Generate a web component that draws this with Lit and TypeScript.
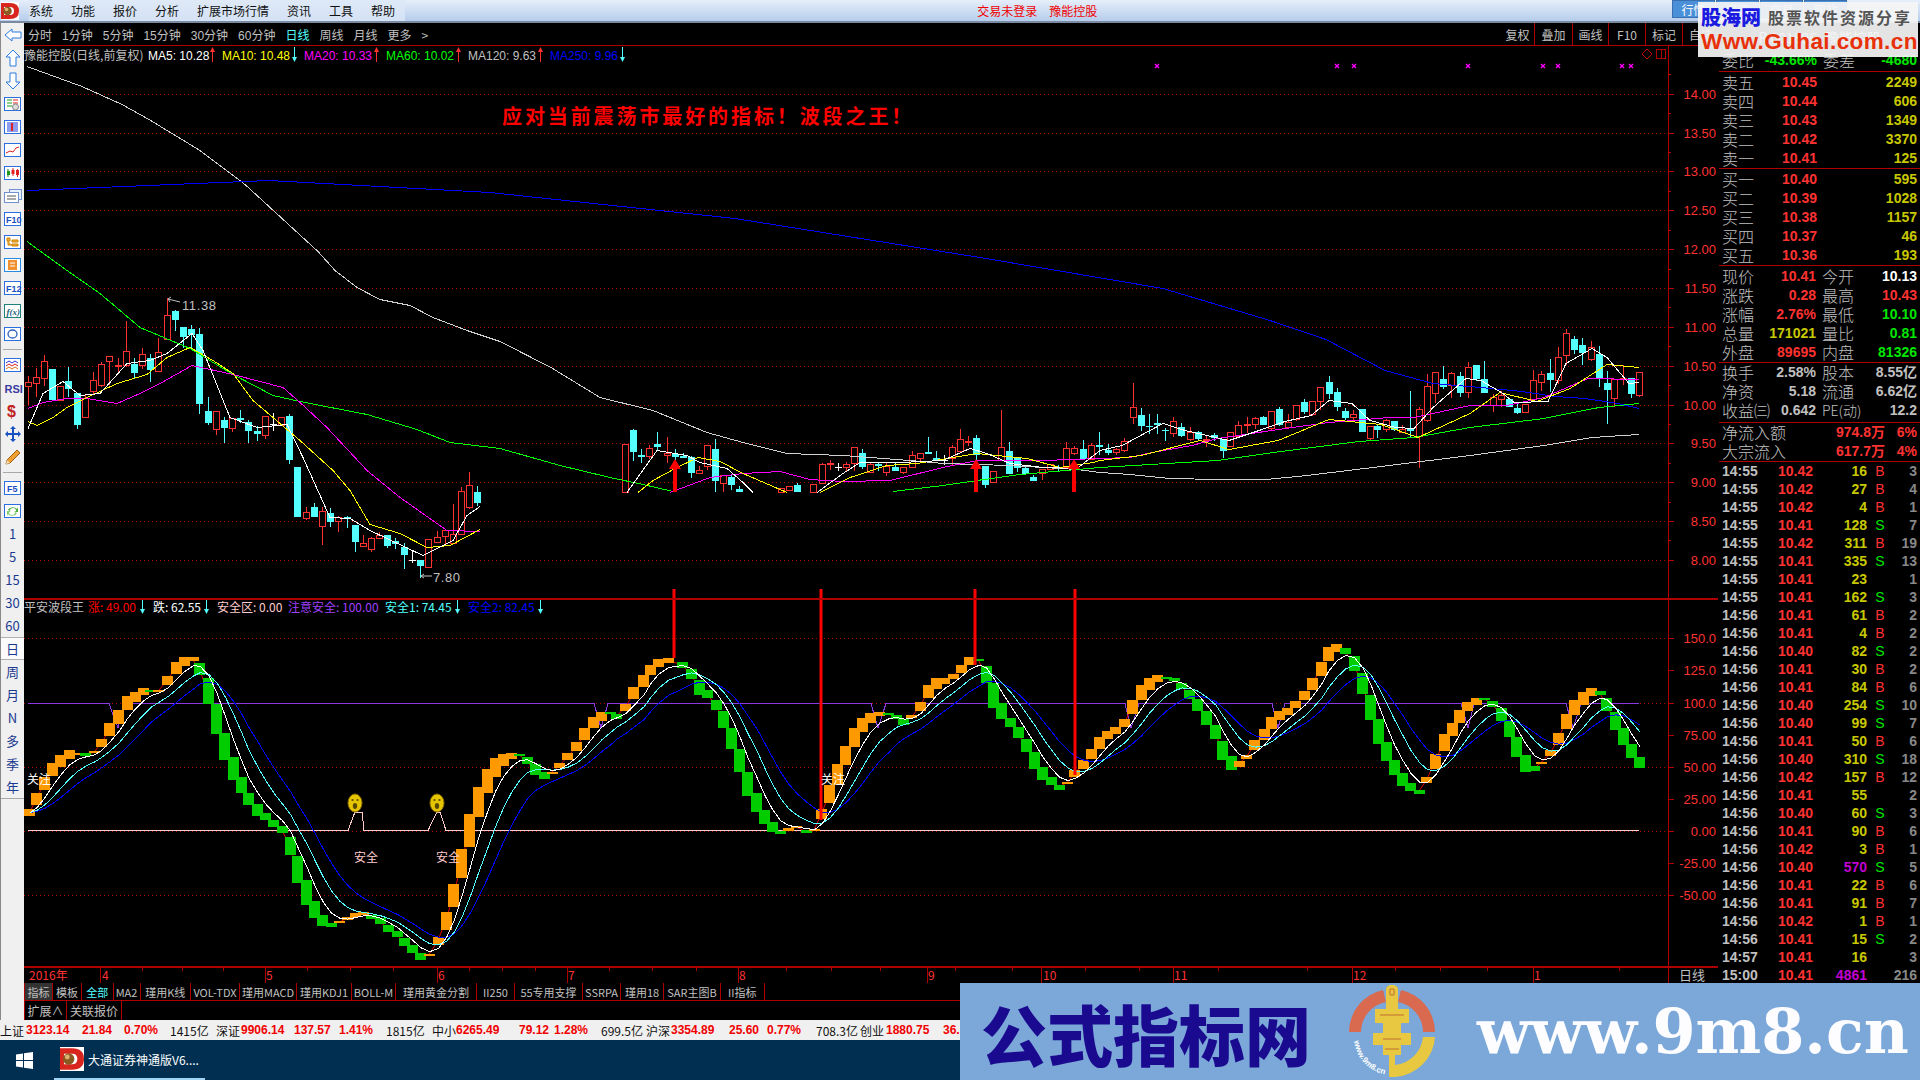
import { LitElement, html, svg, css, unsafeCSS } from "lit";
import { customElement } from "lit/decorators.js";

const CJK = css`"Noto Sans CJK SC", "Liberation Sans", sans-serif`;
const NUM = css`"Liberation Sans", "Noto Sans CJK SC", sans-serif`;

const RED = "#ff3232";
const CYAN = "#54ffff";
const ORANGE = "#ff9900";
const GREEN = "#00cc00";
const cRED = unsafeCSS(RED);
const cCYAN = unsafeCSS(CYAN);

type C = [number, number, number, number, number, string];
// x, bodyTop, bodyBottom, wickTop, wickBottom, kind in zoomed coordinates
const seg1: C[] = [
  [85,337,349,318,405,"r"],[109,322,338,295,380,"r"],[133,272,325,254,347,"r"],[157,297,390,297,390,"c"],[181,348,390,348,392,"r"],[205,334,357,292,380,"c"],[232,370,465,370,476,"c"],[256,385,440,375,440,"r"],[280,331,362,305,375,"r"],[304,283,345,275,350,"r"],[328,259,272,259,345,"r"],[355,286,288,265,310,"r"],[379,244,286,153,290,"r"],[403,282,308,265,325,"c"],[427,253,286,235,296,"r"],[451,265,300,252,335,"c"],[475,247,302,205,302,"r"],[502,136,206,85,206,"r"],[526,123,150,120,183,"c"],[550,171,201,171,235,"c"],[574,177,195,165,240,"c"],[598,192,402,175,432,"c"],[625,423,458,380,465,"c"],[649,424,476,424,495,"r"],[673,450,474,440,518,"c"],[697,445,473,445,485,"r"],[721,445,450,420,458,"c"],[745,457,483,450,518,"c"],[772,484,491,468,513,"c"],[796,439,494,439,507,"r"],[820,463,464,428,482,"w"],[844,442,464,442,464,"r"],[868,438,570,433,582,"c"],[892,591,740,591,740,"c"],[919,727,743,712,750,"r"],[943,711,741,700,742,"c"],[967,724,767,710,825,"r"],[991,730,755,715,770,"c"],[1015,742,752,738,785,"r"],[1042,741,745,738,775,"c"],[1066,765,816,765,846,"c"],[1090,818,827,795,827,"r"],[1114,805,838,800,846,"r"],[1138,796,805,786,805,"r"],[1162,796,828,796,834,"c"],[1186,814,823,804,836,"c"],[1213,831,854,820,896,"c"],[1237,870,871,842,880,"w"],[1261,870,888,870,925,"c"],[1285,808,890,808,890,"r"],[1312,800,815,784,815,"r"],[1336,781,799,781,825,"r"],[1360,793,820,702,820,"r"],[1384,664,792,652,792,"r"],[1408,646,710,605,716,"r"],[1432,666,698,648,708,"c"],
];
const seg2: C[] = [
  [46,103,246,103,246,"r"],[70,60,125,57,152,"c"],[94,134,139,118,158,"c"],[118,115,137,105,148,"r"],[142,102,110,66,120,"c"],[170,128,135,82,158,"r"],[194,132,140,118,150,"c"],[218,137,141,128,145,"c"],[242,140,189,138,205,"c"],[266,181,190,168,190,"r"],[290,106,167,106,180,"r"],[316,117,213,88,246,"c"],[340,194,218,194,246,"r"],[364,202,225,195,240,"c"],[388,237,246,228,246,"c"],[512,235,246,235,246,"r"],[536,229,240,229,240,"r"],[560,225,246,220,246,"c"],[610,223,246,223,246,"r"],[635,163,220,158,220,"r"],[659,158,163,150,180,"r"],[683,172,173,160,182,"w"],[707,163,172,155,182,"r"],[733,112,159,112,182,"r"],[757,129,172,118,178,"c"],[781,163,186,155,190,"r"],[805,163,165,160,182,"c"],[829,168,185,155,197,"r"],[856,171,182,160,182,"c"],[880,172,186,172,192,"r"],[905,136,170,123,170,"r"],[929,130,143,130,160,"r"],[953,127,128,82,128,"c"],[977,143,149,124,153,"c"],[1003,150,151,136,165,"w"],[1027,112,143,105,165,"r"],[1051,88,122,57,125,"r"],[1075,92,93,78,108,"r"],[1099,84,135,75,160,"c"],[1126,168,224,168,233,"c"],[1150,184,217,184,217,"r"],[1174,112,150,0,150,"r"],[1198,123,192,97,192,"c"],[1222,143,173,143,185,"c"],[1246,175,192,165,192,"c"],[1270,201,213,195,213,"c"],[1296,176,190,176,210,"r"],[1321,163,177,163,177,"r"],[1345,172,178,165,183,"c"],[1369,114,170,97,175,"r"],[1393,115,129,108,135,"r"],[1420,118,146,90,146,"c"],[1444,106,147,100,150,"r"],[1468,105,110,67,135,"c"],
];
const seg3: C[] = [
  [22,390,398,372,405,"c"],[44,388,396,384,405,"r"],[66,362,390,355,395,"r"],[88,262,290,188,312,"r"],[110,285,318,265,332,"c"],[132,318,319,282,342,"x"],[154,310,315,282,342,"c"],[176,330,331,325,362,"x"],[198,304,340,292,350,"r"],[220,322,347,310,350,"c"],[242,337,356,320,362,"r"],[264,336,357,333,364,"c"],[286,358,360,345,382,"r"],[308,346,354,340,362,"c"],[332,358,392,356,414,"c"],[352,337,377,337,377,"r"],[374,316,348,303,350,"r"],[396,313,316,290,340,"r"],[418,295,311,292,328,"r"],[440,291,316,288,316,"c"],[462,274,324,274,330,"r"],[484,267,316,262,318,"c"],[507,307,322,282,328,"r"],[529,256,298,256,302,"r"],[551,246,276,236,283,"c"],[573,244,282,244,288,"r"],[596,202,242,202,270,"r"],[618,186,222,168,238,"c"],[640,216,261,205,274,"c"],[661,273,294,265,300,"c"],[683,283,290,270,300,"r"],[707,268,336,268,336,"c"],[729,318,355,318,362,"r"],[750,318,330,312,355,"c"],[772,301,326,298,336,"r"],[794,304,330,304,332,"c"],[817,327,335,316,336,"r"],[839,323,332,212,350,"c"],[861,268,348,260,443,"r"],[883,198,300,162,305,"r"],[905,157,218,157,250,"r"],[928,177,200,138,208,"c"],[950,160,196,155,233,"r"],[972,168,219,155,232,"c"],[994,142,215,127,235,"r"],[1016,134,178,134,184,"c"],[1038,178,219,123,220,"c"],[1061,232,254,222,276,"r"],[1083,226,236,213,262,"r"],[1105,237,261,237,261,"c"],[1126,264,278,252,282,"c"],[1148,253,275,253,275,"r"],[1171,181,238,151,240,"r"],[1193,163,187,152,214,"r"],[1215,159,180,118,216,"c"],[1237,111,180,82,192,"r"],[1259,40,104,28,134,"r"],[1281,57,89,48,102,"c"],[1304,75,98,55,135,"c"],[1326,82,116,64,122,"r"],[1348,102,174,78,200,"c"],[1370,189,209,154,311,"c"],[1390,178,233,178,260,"r"],[1413,173,175,135,196,"r"],[1436,173,222,173,233,"c"],[1458,157,224,157,231,"r"],
];

type K = { x: number; t: number; b: number; wt: number; wb: number; k: string };
const conv = (arr: C[], ox: number, fx: number, oy: number): K[] =>
  arr.map(([x, t, b, wt, wb, k]) => ({
    x: Math.round(ox + x / fx),
    t: Math.round(oy + t / 3),
    b: Math.round(oy + b / 3),
    wt: Math.round(oy + wt / 3),
    wb: Math.round(oy + wb / 3),
    k,
  }));
const candles: K[] = [
  ...conv(seg1, 0, 3, 270),
  ...conv(seg2, 610, 3, 410),
  ...conv(seg3, 1100, 2.703, 320),
];

type B = [number, number, number, string];
const blocksA: B[] = [
  [72,657,678,"o"],[89,610,645,"o"],[108,560,600,"o"],[128,520,560,"o"],[148,495,530,"o"],[168,480,507,"o"],[188,490,494,"o"],[208,490,500,"g"],[230,484,490,"o"],[248,447,472,"o"],[268,400,438,"o"],[290,360,402,"o"],[310,318,360,"o"],[330,307,336,"o"],[350,295,315,"o"],[368,300,304,"g"],[388,300,304,"o"],[410,258,285,"o"],[430,217,252,"o"],[450,202,228,"o"],[472,202,215,"o"],[488,220,257,"g"],[510,265,343,"g"],[530,343,432,"g"],[550,428,508,"g"],[570,502,570,"g"],[590,562,610,"g"],[608,610,647,"g"],[630,643,678,"g"],[650,670,692,"g"],[670,690,710,"g"],[690,708,728,"g"],[710,742,795,"g"],[728,798,878,"g"],[750,870,945,"g"],[770,934,986,"g"],[790,975,1007,"g"],[810,998,1010,"g"],[830,993,1000,"o"],[850,982,990,"o"],[870,968,980,"o"],[890,966,974,"o"],[910,975,988,"g"],[930,985,1004,"g"],[950,1005,1025,"g"],[972,1024,1043,"g"],[990,1044,1067,"g"],[1010,1066,1090,"g"],[1030,1090,1112,"g"],[1050,1093,1097,"o"],[1072,1042,1067,"o"],[1092,966,1019,"o"],[1111,882,950,"o"],[1130,778,866,"o"],[1150,672,770,"o"],[1170,592,682,"o"],[1192,538,610,"o"],[1212,504,560,"o"],[1232,492,527,"o"],[1252,490,508,"o"],[1272,492,496,"g"],[1290,502,524,"g"],[1310,522,556,"g"],[1332,546,566,"g"],[1352,545,549,"o"],[1370,520,534,"o"],[1390,490,512,"o"],[1412,457,485,"o"],[1432,415,452,"o"],[1452,382,415,"o"],[1472,366,392,"o"],[1494,366,370,"g"],[1510,372,386,"g"],[1532,342,362,"o"],[1552,292,328,"o"],
];
const blocksB: B[] = [
  [5,255,290,"o"],[15,225,255,"o"],[27,207,232,"o"],[42,204,218,"o"],[64,216,233,"g"],[77,238,268,"g"],[90,270,316,"g"],[102,300,323,"g"],[115,330,360,"g"],[127,363,413,"g"],[139,414,476,"g"],[151,478,548,"g"],[163,546,617,"g"],[177,610,668,"g"],[189,660,702,"g"],[201,696,725,"g"],[213,722,731,"g"],[225,714,722,"o"],[238,708,715,"o"],[252,720,728,"g"],[265,718,720,"o"],[276,657,688,"o"],[288,585,638,"o"],[300,522,585,"o"],[312,468,525,"o"],[325,414,470,"o"],[338,385,427,"o"],[350,370,400,"o"],[363,367,380,"o"],[378,370,374,"g"],[389,376,388,"g"],[401,388,405,"g"],[413,376,386,"o"],[426,336,362,"o"],[438,286,326,"o"],[450,265,298,"o"],[463,263,280,"o"],[476,252,268,"o"],[488,225,248,"o"],[500,202,225,"o"],[515,208,213,"g"],[526,228,278,"g"],[538,280,356,"g"],[550,338,386,"g"],[563,383,410,"g"],[575,412,446,"g"],[587,448,488,"g"],[600,487,537,"g"],[612,530,570,"g"],[625,562,587,"g"],[637,584,598,"g"],[650,577,579,"o"],[661,540,560,"o"],[675,510,537,"o"],[687,477,507,"o"],[699,441,477,"o"],[711,424,449,"o"],[723,411,432,"o"],[737,387,411,"o"],[749,331,372,"o"],[762,284,329,"o"],[774,264,300,"o"],[787,256,278,"o"],[800,262,265,"g"],[813,265,275,"g"],[824,280,299,"g"],[836,300,327,"g"],[848,327,362,"g"],[861,364,406,"g"],[875,404,446,"g"],[886,454,510,"g"],[899,498,539,"g"],[911,513,530,"o"],[923,495,506,"o"],[935,450,480,"o"],[949,417,450,"o"],[961,382,417,"o"],[973,363,390,"o"],[985,354,375,"o"],[997,334,354,"o"],[1011,303,330,"o"],[1023,264,300,"o"],[1036,215,258,"o"],[1047,172,214,"o"],[1060,163,186,"o"],[1073,175,194,"g"],[1086,198,242,"g"],[1099,250,314,"g"],[1111,316,390,"g"],[1123,388,464,"g"],[1135,455,512,"g"],[1147,510,555,"g"],[1160,550,588,"g"],[1172,580,604,"g"],[1185,600,611,"g"],[1197,561,578,"o"],[1210,492,537,"o"],[1223,433,485,"o"],[1236,398,437,"o"],[1247,361,400,"o"],[1259,336,362,"o"],[1272,325,345,"o"],[1285,325,328,"g"],[1297,334,352,"g"],[1310,354,392,"g"],[1322,393,440,"g"],[1334,441,500,"g"],[1347,494,544,"g"],[1360,528,544,"g"],[1372,516,518,"o"],[1385,481,500,"o"],[1397,430,467,"o"],[1409,373,418,"o"],[1421,331,376,"o"],[1435,306,344,"o"],[1447,295,318,"o"],[1461,304,315,"g"],[1471,325,365,"g"],[1484,367,422,"g"],[1496,415,465,"g"],[1508,463,505,"g"],[1521,502,536,"g"],
];
const blocks = [
  ...blocksA.map(([x, t, b, k]) => ({ x: x / 2.45, t: 590 + t / 3, b: 590 + b / 3, k })),
  ...blocksB.map(([x, t, b, k]) => ({ x: 640 + x / 1.522, t: 590 + t / 3, b: 590 + b / 3, k })),
];

const ema2 = (vals: number[], a: number) => {
  let e1 = vals[0];
  let e2 = vals[0];
  return vals.map((v) => {
    e1 = e1 + a * (v - e1);
    e2 = e2 + a * (e1 - e2);
    return e2;
  });
};
const mids = blocks.map((b) => (b.t + b.b) / 2);
const linePts = (a: number, off = 0) =>
  ema2(mids, a)
    .map((v, i) => `${(blocks[i].x + off).toFixed(1)},${v.toFixed(1)}`)
    .join(" ");

const ma: { c: string; segs: number[][] }[] = [
  { c: "#d0d0d0", segs: [[27,66,82,86,122,104,149,119,200,150,245,184,318,251,335,270,357,287,380,299,410,305,433,317,467,330,500,341,551,367,600,397,653,410,707,432,743,442,787,453,843,455,910,460,943,463,1010,465,1077,469,1100,472,1130,474,1170,478,1218,479,1266,479,1307,475,1381,466,1470,455,1544,445,1592,437,1639,434]] },
  { c: "#0000ff", segs: [[27,190,269,180,490,192,735,218,980,257,1163,288,1270,320,1326,339,1385,370,1433,383,1481,387,1522,391,1555,396,1585,398,1618,403,1639,408]] },
  { c: "#00ff00", segs: [[27,241,67,270,100,293,140,327,190,348,233,374,273,395,300,401,367,414,417,429,450,442,500,448,560,465,610,477,643,484,673,491],[893,491,943,485,977,480,1020,474,1077,469,1100,467,1167,463,1218,460,1281,451,1359,441,1414,437,1470,427,1544,418,1599,407,1639,403]] },
  { c: "#ff00ff", segs: [[28,408,43,402,67,398,87,398,117,403,140,393,160,383,192,365,233,374,283,387,300,402,327,427,367,470,400,497,447,530,480,531],[670,492,710,477,743,473,780,471,810,479,843,481,890,480,943,467,977,460,1043,460,1100,458,1130,457,1152,452,1192,445,1218,438,1285,428,1329,422,1389,417,1414,417,1470,405,1507,405,1544,397,1588,378,1639,379]] },
  { c: "#ffff00", segs: [[28,421,37,425,53,417,67,407,87,397,117,383,147,374,167,357,190,347,213,360,233,373,253,400,280,423,300,440,333,470,350,490,370,524,400,533,427,547,450,545,480,529],[638,492,653,480,677,467,698,457,720,461,743,473,787,492],[820,492,850,477,887,465,917,463,977,453,1027,458,1060,467,1093,462,1100,460,1141,455,1200,440,1229,449,1278,440,1329,419,1381,424,1418,437,1470,413,1500,392,1537,401,1570,388,1607,364,1639,367]] },
  { c: "#ffffff", segs: [[28,428,43,393,63,381,80,395,100,393,127,363,150,360,167,353,192,333,203,350,230,417,257,427,287,424,303,457,330,517,350,518,370,530,423,555,453,540,467,515,480,506],[627,492,657,450,687,455,700,462,727,468,743,482,753,492],[817,492,843,473,860,462,900,462,943,460,970,448,987,453,1010,463,1043,467,1077,468,1100,450,1122,445,1137,437,1163,423,1185,430,1229,440,1259,430,1285,421,1311,415,1329,400,1352,403,1370,420,1396,427,1414,428,1433,407,1466,378,1481,380,1503,393,1514,402,1548,401,1566,363,1592,348,1607,357,1629,383,1639,382]] },
];

const pairs = (s: number[]) => {
  const o: string[] = [];
  for (let i = 0; i < s.length; i += 2) o.push(`${s[i]},${s[i + 1] + 0.5}`);
  return o.join(" ");
};

const priceY = (p: number) => 93.7 + (14 - p) * 77.7;
const oscY = (v: number) => 831 - v * 1.285;
const px = (v: number) => Math.round(v) + 0.5;

const purpleDips: [number, number, number][] = [
  [109, 118, 124],
  [594, 601, 608],
  [871, 878, 886],
  [1125, 1131, 1139],
  [1272, 1278, 1285],
  [1461, 1468, 1474],
  [1566, 1573, 1581],
];
const purplePts = (() => {
  const o: string[] = ["28,703.5"];
  for (const [a, b, c] of purpleDips) o.push(`${a},703.5`, `${b},728`, `${c},703.5`);
  o.push("1639,703.5");
  return o.join(" ");
})();

const arrow = (x: number, y: number, up: boolean, c: string) =>
  up
    ? svg`<path d="M${x + 0.5} ${y - 7}v14" stroke=${c} shape-rendering="crispEdges"/><path d="M${x - 2} ${y - 3}L${x + 0.5} ${y - 8}L${x + 3} ${y - 3}Z" fill=${c}/>`
    : svg`<path d="M${x + 0.5} ${y - 8}v12" stroke=${c} shape-rendering="crispEdges"/><path d="M${x - 2} ${y + 2}L${x + 0.5} ${y + 7}L${x + 3} ${y + 2}Z" fill=${c}/>`;

const maLabels: [number, string, string, number, boolean][] = [
  [148, "MA5: 10.28", "#ffffff", 212, true],
  [222, "MA10: 10.48", "#ffff00", 294, false],
  [304, "MA20: 10.33", "#ff00ff", 376, true],
  [386, "MA60: 10.02", "#00ff00", 458, true],
  [468, "MA120: 9.63", "#c0c0c0", 540, true],
  [550, "MA250: 9.96", "#0000ff", 622, false],
];
const oscLabels: [number, string, string][] = [
  [88, "涨: 49.00", "#ff0000"],
  [153, "跌: 62.55", "#ffffff"],
  [217, "安全区: 0.00", "#ffcccc"],
  [288, "注意安全: 100.00", "#a040ff"],
  [385, "安全1: 74.45", "#54ffff"],
  [468, "安全2: 82.45", "#0000ff"],
];
const dateLabels: [number, string][] = [
  [29, "2016年"], [102, "4"], [266, "5"], [438, "6"], [568, "7"], [739, "8"], [928, "9"], [1043, "10"], [1174, "11"], [1353, "12"], [1534, "1"],
];
const dateSeps = [100, 265, 437, 567, 738, 927, 1041, 1173, 1352, 1533];
const dateTicks = [142, 182, 223, 307, 350, 393, 469, 502, 535, 609, 652, 696, 786, 831, 880, 955, 1012, 1085, 1139, 1218, 1307, 1395, 1440, 1487, 1619];
const marks = [1157, 1337, 1354, 1468, 1543, 1558, 1622, 1631];

const face = (cx: number) => svg`
  <ellipse cx=${cx} cy="803" rx="7" ry="9" fill="#e6c400" stroke="#8a7000"/>
  <circle cx=${cx - 2.5} cy="800" r="1.1" fill="#5a4a00"/>
  <circle cx=${cx + 2.5} cy="800" r="1.1" fill="#5a4a00"/>
  <ellipse cx=${cx} cy="806" rx="2.2" ry="3" fill="#5a4a00"/>`;

@customElement("kline-chart")
class KlineChart extends LitElement {
  static styles = css`
    :host { display: block; width: 1694px; height: 937px; }
    svg { display: block; background: #000; }
    text { font-family: ${NUM}; }
    .t12 { font-size: 12px; }
    .cjk { font-family: ${CJK}; font-size: 12px; }
    .axis { font-size: 13px; fill: ${cRED}; text-anchor: end; }
    .date { font-family: ${CJK}; font-size: 12px; fill: ${cRED}; }
    .head { font-family: ${CJK}; font-size: 20px; font-weight: 700; fill: #ff0000; letter-spacing: 2.9px; }
    .extreme { font-size: 13px; fill: #c0c0c0; letter-spacing: 0.6px; }
    .note { font-family: ${CJK}; font-size: 12px; fill: #ffcccc; }
    .note-w { font-family: ${CJK}; font-size: 12px; fill: #fff; }
    .period { font-family: ${CJK}; font-size: 13px; fill: #c0c0c0; text-anchor: middle; }
    .crisp { shape-rendering: crispEdges; }
    .dot { stroke: #a80000; stroke-dasharray: 1 3; shape-rendering: crispEdges; }
    .frame { stroke: #b00000; shape-rendering: crispEdges; fill: none; }
    .frame2 { stroke: #b00000; stroke-width: 2; shape-rendering: crispEdges; fill: none; }
  `;

  render() {
    const priceLevels = [14, 13.5, 13, 12.5, 12, 11.5, 11, 10.5, 10, 9.5, 9, 8.5, 8];
    const oscLevels: [number, string][] = [[150, "150.0"], [125, "125.0"], [100, "100.0"], [75, "75.00"], [50, "50.00"], [25, "25.00"], [0, "0.00"], [-25, "-25.00"], [-50, "-50.00"]];
    const oscDots = [150, 100, 50, 0, -50];
    return html`<svg width="1694" height="937" viewBox="24 46 1694 937">
      <!-- grids -->
      ${priceLevels.map((p) => svg`<line class="dot" x1="24" x2="1668" y1=${px(priceY(p))} y2=${px(priceY(p))}/>`)}
      ${oscDots.map((v) => svg`<line class="dot" x1="24" x2="1668" y1=${px(oscY(v))} y2=${px(oscY(v))}/>`)}

      <!-- candlesticks -->
      <g class="crisp">
        ${candles.map((k) => {
          const col = k.k === "r" ? RED : k.k === "c" || k.k === "x" ? CYAN : "#fff";
          const wick = svg`<line x1=${k.x + 0.5} x2=${k.x + 0.5} y1=${k.wt} y2=${k.wb} stroke=${col}/>`;
          if (k.k === "w" || k.k === "x")
            return svg`${wick}<line x1=${k.x - 3} x2=${k.x + 4} y1=${k.t + 0.5} y2=${k.t + 0.5} stroke=${col}/>`;
          if (k.k === "r")
            return svg`${wick}<rect x=${k.x - 2.5} y=${k.t + 0.5} width="6" height=${Math.max(1, k.b - k.t)} fill="#000" stroke=${RED}/>`;
          return svg`${wick}<rect x=${k.x - 3} y=${k.t} width="7" height=${Math.max(2, k.b - k.t)} fill=${CYAN}/>`;
        })}
      </g>
      <g class="crisp">
        ${ma.map((m) => m.segs.map((s) => svg`<polyline points=${pairs(s)} fill="none" stroke=${m.c}/>`))}
      </g>

      <!-- buy arrows -->
      ${[675, 976, 1074].map((x) => svg`<path d="M${x - 6} 469L${x} 459L${x + 6} 469L${x + 2} 469V492H${x - 2}V469Z" fill="#ff0000"/>`)}

      <!-- extremes -->
      <path d="M168 299L180 302M168 299l3 -2M168 299l2 3" stroke="#c0c0c0" fill="none"/>
      <text class="extreme" x="182" y="310">11.38</text>
      <path d="M421 576H432M421 576l3 -2M421 576l3 2" stroke="#c0c0c0" fill="none"/>
      <text class="extreme" x="433" y="582">7.80</text>

      <!-- headline -->
      <text class="head" x="502" y="124">应对当前震荡市最好的指标！波段之王！</text>

      <!-- marks -->
      ${marks.map((x) => svg`<path d="M${x - 2} 64l4 4M${x + 2} 64l-4 4" stroke="#ff00ff" stroke-width="1.4"/>`)}
      <path d="M1647 49l5 5l-5 5l-5 -5Z" stroke="#c00000" fill="none"/>
      <path d="M1656.5 49.5h9v9h-9ZM1661.5 49.5v9" class="frame"/>

      <!-- MA labels -->
      <text class="cjk" fill="#c0c0c0" x="24" y="60">豫能控股(日线,前复权)</text>
      ${maLabels.map(([x, t, c, ax, up]) => svg`<text class="t12" fill=${c} x=${x} y="60">${t}</text>${arrow(ax, 55, up, up ? "#ff3232" : CYAN)}`)}

      <!-- oscillator -->
      <polyline points=${purplePts} fill="none" stroke="#8a3ae0" class="crisp"/>
      <polyline points="28,830.5 348,830.5 355,812 362,812 364,830.5 428,830.5 437,812 440,812 446,830.5 1639,830.5" fill="none" stroke="#ffcccc" class="crisp"/>
      <polyline points=${blocks.map((b) => `${b.x.toFixed(1)},${((b.t + b.b) / 2).toFixed(1)}`).join(" ")} fill="none" stroke="#e00000"/>
      <g class="crisp">
        ${blocks.map((b) => svg`<rect x=${Math.round(b.x - 5)} y=${Math.round(b.t)} width="11" height=${Math.max(2, Math.round(b.b - b.t))} fill=${b.k === "o" ? ORANGE : GREEN}/>`)}
      </g>
      <g class="crisp">
        <polyline points=${linePts(0.3, 1)} fill="none" stroke="#0000ff"/>
        <polyline points=${linePts(0.42, 1)} fill="none" stroke="#54ffff"/>
        <polyline points=${linePts(0.62, 1)} fill="none" stroke="#ffffff"/>
      </g>

      ${[674, 821, 975, 1075].map((x, i) => svg`<line x1=${x} x2=${x} y1="589" y2=${[658, 820, 665, 775][i]} stroke="#ff0000" stroke-width="3"/>`)}

      ${face(355)}${face(437)}
      <text class="note" x="354" y="862">安全</text>
      <text class="note" x="436" y="862">安全</text>
      <text class="note-w" x="27" y="784">关注</text>
      <text class="note-w" x="821" y="784">关注</text>

      <text class="cjk" fill="#c0c0c0" x="24" y="612">平安波段王</text>
      ${oscLabels.map(([x, t, c]) => svg`<text class="cjk" fill=${c} x=${x} y="612">${t}</text>`)}
      ${arrow(142, 607, false, CYAN)}${arrow(206, 607, false, CYAN)}${arrow(457, 607, false, CYAN)}${arrow(540, 607, false, CYAN)}

      <!-- frames -->
      <path class="frame" d="M1668.5 46V967"/>
      <path class="frame" d="M24 983.5H1719"/>
      <path class="frame2" d="M24 598.5H1719M24 967H1719"/>
      <path class="frame" d="M1718.5 46V983"/>

      <!-- price axis -->
      ${priceLevels.map((p) => svg`
        <path class="frame" d="M1668 ${px(priceY(p))}h6M1668 ${px(priceY(p + 0.25))}h3"/>
        <text class="axis" x="1716" y=${priceY(p) + 5}>${p.toFixed(2)}</text>`)}
      ${oscLevels.map(([v, t]) => svg`
        <path class="frame" d="M1668 ${px(oscY(v))}h6"/>
        <text class="axis" x="1716" y=${oscY(v) + 5}>${t}</text>`)}

      <!-- date axis -->
      ${dateSeps.map((x) => svg`<path class="frame" d="M${x + 0.5} 968V983"/>`)}
      ${dateTicks.map((x) => svg`<path class="frame" d="M${x + 0.5} 968v3"/>`)}
      ${dateLabels.map(([x, t]) => svg`<text class="date" x=${x} y="980">${t}</text>`)}
      <path class="frame" d="M1668.5 967V983"/>
      <text class="period" x="1692" y="980">日线</text>
    </svg>`;
  }
}

const box = (inner: unknown, c = "#2a6ee0") =>
  html`<svg width="20" height="18" viewBox="0 0 20 18"><rect x="1.5" y="2.5" width="16" height="13" fill="#fff" stroke=${c}/>${inner}</svg>`;
const plain = (inner: unknown) =>
  html`<svg width="20" height="18" viewBox="0 0 20 18">${inner}</svg>`;

const icons: unknown[] = [
  plain(svg`<path d="M2 9L9 3V6H18V12H9V15Z" fill="#fff" stroke="#2a7ae0"/>`),
  plain(svg`<path d="M10 1L17 8H13V17H7V8H3Z" fill="#fff" stroke="#2a7ae0"/>`),
  plain(svg`<path d="M10 17L17 10H13V1H7V10H3Z" fill="#fff" stroke="#2a7ae0"/>`),
  box(svg`<path d="M4 5h5M4 8h5M4 11h5" stroke="#1a9a1a"/><path d="M10 5h5M10 8h5" stroke="#e02020"/><circle cx="12.5" cy="12" r="3" fill="#ddd" stroke="#888"/>`),
  box(svg`<path d="M4 5h11M4 7h11M4 9h11M4 11h11M4 13h11" stroke="#1a3ae0"/><path d="M9 5V13" stroke="#e02020" stroke-width="2"/>`),
  box(svg`<path d="M3 12L7 10L10 11L13 7L16 6" stroke="#e02020" fill="none"/>`),
  box(svg`<path d="M5 5V13" stroke="#1a7a1a"/><rect x="4" y="7" width="3" height="4" fill="#1a9a1a"/><path d="M10 4V12" stroke="#e02020"/><rect x="8.5" y="6" width="3" height="4" fill="#e02020"/><path d="M14.5 5V13" stroke="#e02020"/><rect x="13" y="6" width="3" height="5" fill="#e02020"/>`),
  plain(svg`<rect x="6.5" y="2.5" width="12" height="10" fill="#e8f0ff" stroke="#7090d0"/><rect x="1.5" y="5.5" width="14" height="10" fill="#fff" stroke="#7090d0"/><path d="M4 9h9M4 12h9" stroke="#555"/>`),
  box(svg`<text x="3" y="12.5" class="ic-t">F10</text>`),
  box(svg`<path d="M4 5h3v3H4ZM9 7h6v2H9ZM9 11h6v2H9ZM5 8v4h4" fill="#f0b040" stroke="#d08000"/>`),
  box(svg`<rect x="5" y="4" width="9" height="10" fill="#f09030"/><path d="M7 7h5M7 10h5" stroke="#fff"/>`, "#2a8ae0"),
  box(svg`<text x="3" y="12.5" class="ic-t">F12</text>`),
  box(svg`<text x="3.5" y="12.5" class="ic-f">f(x)</text>`, "#20807a"),
  box(svg`<ellipse cx="9.5" cy="9" rx="4.5" ry="4" fill="none" stroke="#2a5ec0" stroke-width="1.3"/>`),
  null,
  box(svg`<path d="M3 7l3 -2l3 2l3 -2l3 2" stroke="#3030e0" fill="none"/><path d="M3 10l3 -2l3 2l3 -2l3 2" stroke="#e02020" fill="none"/><path d="M3 13l3 -2l3 2l3 -2l3 2" stroke="#e07020" fill="none"/>`),
  plain(svg`<text x="1.5" y="13.5" class="ic-rsi">RSI</text>`),
  plain(svg`<text x="4" y="15" class="ic-s">$</text>`),
  plain(svg`<path d="M10 1l3 3H11V8h4V6l3 3l-3 3V10H11v4h2l-3 3l-3 -3h2V10H5v2L2 9l3 -3v2h4V4H7Z" fill="#1a50c0"/>`),
  plain(svg`<path d="M3 16l1 -4L14 2l3 3L7 15Z" fill="#f0a030" stroke="#a06010"/><path d="M3 16l1 -4l3 3Z" fill="#f5e0c0"/>`),
  null,
  box(svg`<text x="4" y="12.5" class="ic-t">F5</text>`),
  box(svg`<path d="M5 8a5 4 0 0 1 9 -1l1 -2v5h-4l2 -1a3 3 0 0 0 -6 0Z" fill="#50b040"/><path d="M14 11a5 4 0 0 1 -9 1l-1 2v-5h4l-2 1a3 3 0 0 0 6 0Z" fill="#80d070"/>`),
];
const sideTexts = ["1", "5", "15", "30", "60", "日", "周", "月", "N", "多", "季", "年"];

@customElement("side-bar")
class SideBar extends LitElement {
  static styles = css`
    :host { display: flex; flex-direction: column; align-items: stretch; width: 24px; background: #f0f0f0; border-left: 1px solid #888; box-sizing: border-box; flex: none; }
    .item { height: 23px; flex: none; display: flex; align-items: center; justify-content: center; }
    .sep { height: 1px; margin: 3.5px 2px; background: #a8a8a8; flex: none; }
    .txt { font-family: ${CJK}; font-size: 13px; color: #1a3a90; }
    .sel { background: #fbfbfb; border-top: 1px solid #b0b0b0; border-bottom: 1px solid #b0b0b0; box-sizing: border-box; }
    .end { height: 1px; background: #a8a8a8; }
    svg { display: block; }
    .ic-t { font: 700 9px "Liberation Sans", sans-serif; fill: #1a50c0; }
    .ic-f { font: italic 700 9px "Liberation Serif", serif; fill: #20607a; }
    .ic-rsi { font: 900 11px "Liberation Sans", sans-serif; fill: #3a3aa0; }
    .ic-s { font: 900 16px "Liberation Sans", sans-serif; fill: #c02020; }
  `;
  render() {
    return html`
      ${icons.map((ic) => (ic === null ? html`<div class="sep"></div>` : html`<div class="item">${ic}</div>`))}
      ${sideTexts.map((t) => html`<div class="item txt ${t === "日" ? "sel" : ""}">${t}</div>`)}
      <div class="end"></div>`;
  }
}

const sell = [["卖五","10.45","2249"],["卖四","10.44","606"],["卖三","10.43","1349"],["卖二","10.42","3370"],["卖一","10.41","125"]];
const buy = [["买一","10.40","595"],["买二","10.39","1028"],["买三","10.38","1157"],["买四","10.37","46"],["买五","10.36","193"]];
const quote = [
  ["现价","10.41","r","今开","10.13","w"],
  ["涨跌","0.28","r","最高","10.43","r"],
  ["涨幅","2.76%","r","最低","10.10","g"],
  ["总量","171021","y","量比","0.81","g"],
  ["外盘","89695","r","内盘","81326","g"],
];
const stats = [
  ["换手","2.58%","股本","8.55亿"],
  ["净资","5.18","流通","6.62亿"],
  ["收益㈢","0.642","PE(动)","12.2"],
];
const flow = [["净流入额","974.8万","6%"],["大宗流入","617.7万","4%"]];
const ticks: [string, string, string, string, string, number?][] = [
  ["14:55","10.42","16","B","3"],["14:55","10.42","27","B","4"],["14:55","10.42","4","B","1"],["14:55","10.41","128","S","7"],["14:55","10.42","311","B","19"],["14:55","10.41","335","S","13"],["14:55","10.41","23","","1"],["14:55","10.41","162","S","3"],["14:56","10.41","61","B","2"],["14:56","10.41","4","B","2"],["14:56","10.40","82","S","2"],["14:56","10.41","30","B","2"],["14:56","10.41","84","B","6"],["14:56","10.40","254","S","10"],["14:56","10.40","99","S","7"],["14:56","10.41","50","B","6"],["14:56","10.40","310","S","18"],["14:56","10.42","157","B","12"],["14:56","10.41","55","","2"],["14:56","10.40","60","S","3"],["14:56","10.41","90","B","6"],["14:56","10.42","3","B","1"],["14:56","10.40","570","S","5",1],["14:56","10.41","22","B","6"],["14:56","10.41","91","B","7"],["14:56","10.42","1","B","1"],["14:56","10.41","15","S","2"],["14:57","10.41","16","","3"],["15:00","10.41","4861","","216",1],
];

@customElement("quote-panel")
class QuotePanel extends LitElement {
  static styles = css`
    :host { display: flex; flex-direction: column; flex: 1; background: #000; color: #c0c0c0; font-family: ${NUM}; overflow: hidden; }
    .sec { border-bottom: 1px solid #b00000; flex: none; box-sizing: border-box; }
    .top { height: 49px; display: flex; flex-direction: column; justify-content: flex-end; }
    .name { height: 28px; display: flex; align-items: center; justify-content: center; gap: 8px; font: 14px ${CJK}; color: #ddd; }
    .row { display: grid; height: 19px; line-height: 19px; padding: 0 3px; }
    .lab { font-family: ${CJK}; font-size: 16px; font-weight: 300; white-space: nowrap; }
    .pe { font-size: 14px; }
    .num { font-size: 14px; font-weight: 700; text-align: right; white-space: nowrap; }
    .book { grid-template-columns: 40px 55px 1fr; }
    .q { grid-template-columns: 40px 54px 6px 40px 1fr; }
    .st { grid-template-columns: 50px 44px 6px 44px 1fr; }
    .fl { grid-template-columns: 80px 83px 1fr; }
    .wb { grid-template-columns: 40px 55px 6px 34px 1fr; margin-bottom: 1px; }
    .r { color: ${cRED}; } .g { color: #00e600; } .y { color: #c8c800; } .w { color: #fff; } .m { color: #c000d0; } .gr { color: #c0c0c0; }
    .dim { color: #888; }
    .sell, .buy, .quote { height: 97px; padding-top: 1px; }
    .stats { height: 60px; }
    .flow { height: 39px; }
    .ticks { flex: none; }
    .t { display: grid; grid-template-columns: 42px 49px 54px 26px 1fr; height: 18px; line-height: 18px; padding: 0 3px; font-size: 14px; font-weight: 700; }
    .t > span { text-align: right; }
    .t > .time { text-align: left; color: #c0c0c0; }
    .t > .side { text-align: center; font-weight: 400; }
  `;
  render() {
    const bookRow = (r: string[]) => html`<div class="row book"><span class="lab">${r[0]}</span><span class="num r">${r[1]}</span><span class="num y">${r[2]}</span></div>`;
    return html`
      <div class="sec top">
        <div class="name"><span>R 001896</span><span>豫能控股</span></div>
        <div class="row wb"><span class="lab">委比</span><span class="num g">-43.66%</span><span></span><span class="lab">委差</span><span class="num g">-4680</span></div>
      </div>
      <div class="sec sell">${sell.map(bookRow)}</div>
      <div class="sec buy">${buy.map(bookRow)}</div>
      <div class="sec quote">${quote.map((r) => html`<div class="row q"><span class="lab">${r[0]}</span><span class="num ${r[2]}">${r[1]}</span><span></span><span class="lab">${r[3]}</span><span class="num ${r[5]}">${r[4]}</span></div>`)}</div>
      <div class="sec stats">${stats.map((r) => html`<div class="row st"><span class="lab">${r[0]}</span><span class="num gr">${r[1]}</span><span></span><span class="lab ${r[2].startsWith("PE") ? "pe" : ""}">${r[2]}</span><span class="num gr">${r[3]}</span></div>`)}</div>
      <div class="sec flow">${flow.map((r) => html`<div class="row fl"><span class="lab">${r[0]}</span><span class="num r">${r[1]}</span><span class="num r">${r[2]}</span></div>`)}</div>
      <div class="ticks">${ticks.map((t) => html`<div class="t"><span class="time">${t[0]}</span><span class="r">${t[1]}</span><span class=${t[5] ? "m" : "y"}>${t[2]}</span><span class="side ${t[3] === "B" ? "r" : "g"}">${t[3]}</span><span class="dim">${t[4]}</span></div>`)}</div>`;
  }
}

const menus = ["系统","功能","报价","分析","扩展市场行情","资讯","工具","帮助"];
const periods = ["分时","1分钟","5分钟","15分钟","30分钟","60分钟","日线","周线","月线","更多"];
const tools: [string, number][] = [["复权",34],["叠加",38],["画线",36],["F10",37],["标记",37],["自选",36]];
const tabs: [string, number][] = [["指标",29],["模板",29],["全部",31.5],["MA2",27],["瑾用K线",50.5],["VOL-TDX",49],["瑾用MACD",57],["瑾用KDJ1",55],["BOLL-M",44],["瑾用黄金分割",81],["II250",38],["55专用支撑",68],["SSRPA",38],["瑾用18",43],["SAR主图B",57],["II指标",43.5]];
const status: [string, number, string][] = [
  ["上证",26,"b"],["3123.14",56,"r"],["21.84",42,"r"],["0.70%",46,"r"],["1415亿",46,"b"],["深证",25,"b"],["9906.14",53,"r"],["137.57",45,"r"],["1.41%",47,"r"],["1815亿",46,"b"],["中小",24,"b"],["6265.49",63,"r"],["79.12",35,"r"],["1.28%",47,"r"],["699.5亿",45,"b"],["沪深",25,"b"],["3354.89",58,"r"],["25.60",38,"r"],["0.77%",49,"r"],["708.3亿",44,"b"],["创业",26,"b"],["1880.75",57,"r"],["36.19",50,"r"],
];

const logoD = (s: number) => html`<svg width=${s} height=${s} viewBox="0 0 18 18">
  <rect width="18" height="18" fill="#fff"/>
  <path d="M0 1H9Q18 1 18 9Q18 17 9 17H0Z" fill="#d8251d"/>
  <path d="M3 5H9Q13 5 13 9Q13 13 9 13H3Z" fill="#fff"/>
  <circle cx="6.5" cy="9" r="4.3" fill="#8a5a20"/><circle cx="5.5" cy="7.5" r="1.8" fill="#e0b070"/>
</svg>`;

@customElement("app-root")
class AppRoot extends LitElement {
  static styles = css`
    :host { display: flex; flex-direction: column; width: 1920px; height: 1080px; position: relative; overflow: hidden; background: #000; font-family: ${CJK}; }
    .title { height: 21px; flex: none; display: flex; align-items: center; background: linear-gradient(#e6eefa, #b6cdec); position: relative; }
    .logo { width: 18px; height: 20px; display: flex; align-items: center; margin-right: 10px; margin-left: 1px; }
    .menus { display: flex; gap: 18px; font-size: 12px; color: #111; padding-right: 10px; background: linear-gradient(#dfe9f7, #d4e2f5); height: 21px; line-height: 21px; }
    .login { display: flex; gap: 12px; font-size: 12px; color: #f00000; margin-left: 572px; }
    .winbtns { margin-left: auto; display: flex; height: 18px; align-self: flex-start; margin-right: 72px; }
    .winbtn { width: 43px; font-size: 12px; color: #fff; text-align: center; background: #4a90d8; line-height: 18px; border: 1px solid #3a70b0; box-sizing: border-box; margin-right: 1px; }
    .gapline { height: 2px; flex: none; background: #7a8aa0; }
    .main { flex: 1; display: flex; min-height: 0; }
    .col { width: 1695px; flex: none; display: flex; flex-direction: column; background: #000; }
    .toolbar { height: 23px; box-sizing: border-box; border-bottom: 1px solid #b00000; display: flex; align-items: center; color: #c0c0c0; font-size: 12px; padding-left: 4px; flex: none; }
    .periods { display: flex; gap: 10px; font-family: ${NUM}; }
    .cy { color: ${cCYAN}; }
    .more { margin-left: 10px; color: #c0c0c0; }
    .tools { margin-left: auto; display: flex; height: 100%; }
    .tool { display: flex; align-items: center; justify-content: center; border-right: 1px solid #b00000; box-sizing: border-box; white-space: nowrap; }
    .tool.last { border: 0; }
    .tabs { display: flex; height: 17px; flex: none; font-size: 11px; color: #c0c0c0; }
    .tab { display: flex; align-items: center; justify-content: center; border-right: 1px solid #b00000; box-sizing: border-box; white-space: nowrap; overflow: hidden; height: 17px; }
    .tab.first { background: #333; border-left: 1px solid #b00000; }
    .tab.plain { background: #000; }
    .tabs2 { height: 20px; border-top: 1px solid #b00000; box-sizing: border-box; }
    .tabs2 .tab { height: 19px; font-size: 12px; }
    .panel-wrap { flex: 1; display: flex; min-width: 0; }
    .status { height: 20px; flex: none; display: flex; align-items: center; background: #f0f0f0; font-size: 12px; white-space: nowrap; overflow: hidden; }
    .status .b { color: #111; }
    .status .r { color: #f00000; font-family: ${NUM}; font-weight: 700; font-size: 12px; }
    .status span { flex: none; }
    .task { height: 40px; flex: none; background: #002f52; display: flex; align-items: stretch; }
    .win { width: 48px; margin-right: 6px; display: flex; align-items: center; justify-content: center; }
    .tbtn { width: 151px; display: flex; align-items: center; gap: 4px; padding-left: 6px; box-sizing: border-box; border-bottom: 2px solid #9fd4f5; color: #fff; font-size: 12px; }
    .guhai { position: absolute; left: 1698px; top: 2px; width: 220px; height: 55px; background: rgba(245,245,245,0.93); box-sizing: border-box; padding: 2px 3px; }
    .g1 { display: flex; align-items: center; gap: 7px; height: 26px; }
    .g-name { font: 900 20px ${CJK}; color: #1a1ae0; line-height: 24px; }
    .g-sub { font: 700 16px ${CJK}; color: #555; letter-spacing: 2px; white-space: nowrap; }
    .g-url { font: 700 22.5px "Liberation Sans", sans-serif; color: #e8300a; line-height: 24px; white-space: nowrap; letter-spacing: 0.4px; }
    .banner { position: absolute; left: 960px; top: 983px; width: 960px; height: 97px; background: #7ba8d8; display: flex; align-items: center; overflow: hidden; box-sizing: border-box; padding-left: 21px; }
    .b-title { font: 900 66px ${CJK}; color: #1a0a90; line-height: 80px; white-space: nowrap; width: 331px; flex: none; }
    .b-logo { margin-left: 33px; flex: none; }
    .b-url { margin-left: 38px; font: 700 62px "DejaVu Serif", serif; color: #fdfdff; white-space: nowrap; line-height: 66px; }
  `;

  render() {
    return html`
      <div class="title">
        <div class="logo">${logoD(18)}</div>
        <div class="menus">${menus.map((m) => html`<span>${m}</span>`)}</div>
        <div class="login"><span>交易未登录</span><span>豫能控股</span></div>
        <div class="winbtns"><div class="winbtn">行情</div><div class="winbtn">资讯</div><div class="winbtn">交易</div><div class="winbtn">网站</div></div>
      </div>
      <div class="gapline"></div>
      <div class="main">
        <side-bar></side-bar>
        <div class="col">
          <div class="toolbar">
            <div class="periods">${periods.map((p) => html`<span class=${p === "日线" ? "cy" : ""}>${p}</span>`)}</div>
            <span class="more">&gt;</span>
            <div class="tools">${tools.map(([t, w], i) => html`<div class="tool ${i === tools.length - 1 ? "last" : ""}" style="width:${w}px">${t}</div>`)}</div>
          </div>
          <kline-chart></kline-chart>
          <div class="tabs">${tabs.map(([t, w], i) => html`<div class="tab ${i === 0 ? "first" : ""} ${t === "全部" ? "cy" : ""}" style="width:${w}px">${t}</div>`)}</div>
          <div class="tabs tabs2"><div class="tab first plain" style="width:43px">扩展∧</div><div class="tab" style="width:55px">关联报价</div></div>
        </div>
        <div class="panel-wrap"><quote-panel></quote-panel></div>
      </div>
      <div class="status">${status.map(([t, w, c]) => html`<span class=${c} style="width:${w}px">${t}</span>`)}</div>
      <div class="task">
        <div class="win"><svg width="17" height="17" viewBox="0 0 17 17"><path d="M0 2.5L7 1.5V8H0ZM8 1.3L17 0V8H8ZM0 9H7V15.5L0 14.5ZM8 9H17V17L8 15.7Z" fill="#fff"/></svg></div>
        <div class="tbtn">${logoD(24)}<span>大通证券神通版V6....</span></div>
      </div>

      <div class="guhai">
        <div class="g1"><span class="g-name">股海网</span><span class="g-sub">股票软件资源分享</span></div>
        <div class="g-url">Www.Guhai.com.cn</div>
      </div>

      <div class="banner">
        <div class="b-title">公式指标网</div>
        <svg class="b-logo" width="94" height="94" viewBox="0 0 94 94">
          <path d="M4 47A43 43 0 0 1 38 5L41 17A31 31 0 0 0 16 47Z" fill="#d9694f"/>
          <path d="M90 47A43 43 0 0 0 56 5L53 17A31 31 0 0 1 78 47Z" fill="#d9694f"/>
          <path d="M90 52A43 43 0 0 1 50 92L50 80A31 31 0 0 0 78 52Z" fill="#e8c840"/>
          <path d="M47 0C51 0 53 2 53 5L53 24H64V38H56V48H66V60H56V70H50V92H44V70H38V60H28V48H38V38H30V24H41V5C41 2 43 0 47 0Z" fill="#e8c840"/>
          <path d="M45 4h4v6h-4ZM35 30h24M38 54h18M40 64h14" stroke="#c07030" fill="none"/>
          <path id="logoArc" d="M9 56A39 39 0 0 0 44 90" fill="none"/>
          <text font-size="8" fill="#fff" font-family="Liberation Sans, sans-serif" font-weight="700"><textPath href="#logoArc">www.9m8.cn</textPath></text>
        </svg>
        <div class="b-url">www.9m8.cn</div>
      </div>`;
  }
}
